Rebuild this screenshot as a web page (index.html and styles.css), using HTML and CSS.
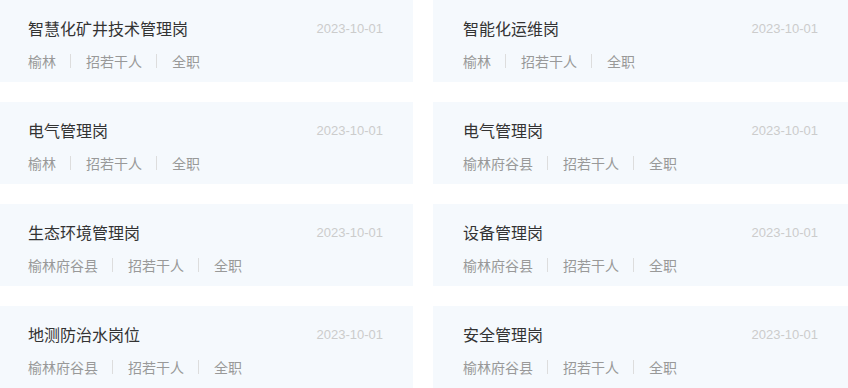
FILE: index.html
```html
<!DOCTYPE html>
<html lang="zh-CN">
<head>
    <meta charset="UTF-8">
    <meta name="viewport" content="width=device-width, initial-scale=1.0">
    <title>招聘岗位</title>
    <link rel="stylesheet" href="styles.css">
</head>
<body>
    <div class="job-list">
        <div class="job-card">
            <div class="job-top">
                <span class="job-title">智慧化矿井技术管理岗</span>
                <span class="job-date">2023-10-01</span>
            </div>
            <div class="job-meta">
                <span>榆林</span><i class="sep"></i><span>招若干人</span><i class="sep"></i><span>全职</span>
            </div>
        </div>
        <div class="job-card">
            <div class="job-top">
                <span class="job-title">智能化运维岗</span>
                <span class="job-date">2023-10-01</span>
            </div>
            <div class="job-meta">
                <span>榆林</span><i class="sep"></i><span>招若干人</span><i class="sep"></i><span>全职</span>
            </div>
        </div>
        <div class="job-card">
            <div class="job-top">
                <span class="job-title">电气管理岗</span>
                <span class="job-date">2023-10-01</span>
            </div>
            <div class="job-meta">
                <span>榆林</span><i class="sep"></i><span>招若干人</span><i class="sep"></i><span>全职</span>
            </div>
        </div>
        <div class="job-card">
            <div class="job-top">
                <span class="job-title">电气管理岗</span>
                <span class="job-date">2023-10-01</span>
            </div>
            <div class="job-meta">
                <span>榆林府谷县</span><i class="sep"></i><span>招若干人</span><i class="sep"></i><span>全职</span>
            </div>
        </div>
        <div class="job-card">
            <div class="job-top">
                <span class="job-title">生态环境管理岗</span>
                <span class="job-date">2023-10-01</span>
            </div>
            <div class="job-meta">
                <span>榆林府谷县</span><i class="sep"></i><span>招若干人</span><i class="sep"></i><span>全职</span>
            </div>
        </div>
        <div class="job-card">
            <div class="job-top">
                <span class="job-title">设备管理岗</span>
                <span class="job-date">2023-10-01</span>
            </div>
            <div class="job-meta">
                <span>榆林府谷县</span><i class="sep"></i><span>招若干人</span><i class="sep"></i><span>全职</span>
            </div>
        </div>
        <div class="job-card">
            <div class="job-top">
                <span class="job-title">地测防治水岗位</span>
                <span class="job-date">2023-10-01</span>
            </div>
            <div class="job-meta">
                <span>榆林府谷县</span><i class="sep"></i><span>招若干人</span><i class="sep"></i><span>全职</span>
            </div>
        </div>
        <div class="job-card">
            <div class="job-top">
                <span class="job-title">安全管理岗</span>
                <span class="job-date">2023-10-01</span>
            </div>
            <div class="job-meta">
                <span>榆林府谷县</span><i class="sep"></i><span>招若干人</span><i class="sep"></i><span>全职</span>
            </div>
        </div>
    </div>
</body>
</html>
```

FILE: styles.css
```css
body {
    margin: 0;
    background: #fff;
    font-family: "Noto Sans CJK SC", "Noto Sans", sans-serif;
    overflow: hidden;
}
.job-list {
    display: grid;
    grid-template-columns: 415px 415px;
    column-gap: 20px;
    row-gap: 20px;
    margin-left: -2px;
}
.job-card {
    background: #f5f9fd;
    height: 82px;
    box-sizing: border-box;
    padding: 17px 30px 0 30px;
}
.job-top {
    display: flex;
    justify-content: space-between;
    align-items: center;
    height: 22px;
}
.job-title {
    font-size: 16px;
    color: #333;
}
.job-date {
    font-size: 13px;
    color: #ccc;
    font-family: "Liberation Sans", Arial, sans-serif;
}
.job-meta {
    display: flex;
    align-items: center;
    margin-top: 12px;
    font-size: 14px;
    color: #999;
    line-height: 20px;
}
.sep {
    width: 1px;
    height: 14px;
    background: #ddd;
    margin: 0 15px 0 14px;
}
```
